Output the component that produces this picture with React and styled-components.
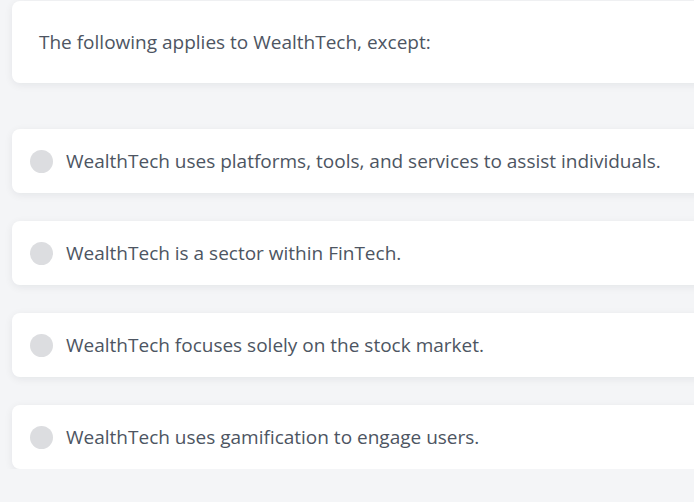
import React from "react";
import styled, { createGlobalStyle } from "styled-components";

const Global = createGlobalStyle`
  html, body { margin: 0; padding: 0; background: #f4f5f7; overflow: hidden; }
  body { font-family: "Open Sans", "Noto Sans", sans-serif; }
`;

const Page = styled.div`
  width: 740px;
  padding: 1px 0 0 12px;
  display: flex;
  flex-direction: column;
`;

const Card = styled.div`
  background: #ffffff;
  border-radius: 8px;
  box-shadow: 0 2px 8px rgba(15, 23, 42, 0.07);
  display: flex;
  align-items: center;
`;

const QuestionCard = styled(Card)`
  height: 82px;
  padding-left: 27px;
  margin-bottom: 46px;
`;

const QuestionText = styled.p`
  margin: 0;
  font-size: 19px;
  color: #4d5562;
`;

const Options = styled.div`
  display: flex;
  flex-direction: column;
  gap: 28px;
`;

const OptionCard = styled(Card)`
  height: 64px;
  padding-left: 18px;
  gap: 13px;
  cursor: pointer;
`;

const Radio = styled.span`
  width: 23px;
  height: 23px;
  border-radius: 50%;
  background: #dcdde0;
  flex: none;
`;

const OptionText = styled.span`
  font-size: 19px;
  color: #4d5562;
`;

const options = [
  "WealthTech uses platforms, tools, and services to assist individuals.",
  "WealthTech is a sector within FinTech.",
  "WealthTech focuses solely on the stock market.",
  "WealthTech uses gamification to engage users.",
];

export default function App() {
  return (
    <>
      <Global />
      <Page>
        <QuestionCard>
          <QuestionText>The following applies to WealthTech, except:</QuestionText>
        </QuestionCard>
        <Options>
          {options.map((o) => (
            <OptionCard key={o}>
              <Radio />
              <OptionText>{o}</OptionText>
            </OptionCard>
          ))}
        </Options>
      </Page>
    </>
  );
}
